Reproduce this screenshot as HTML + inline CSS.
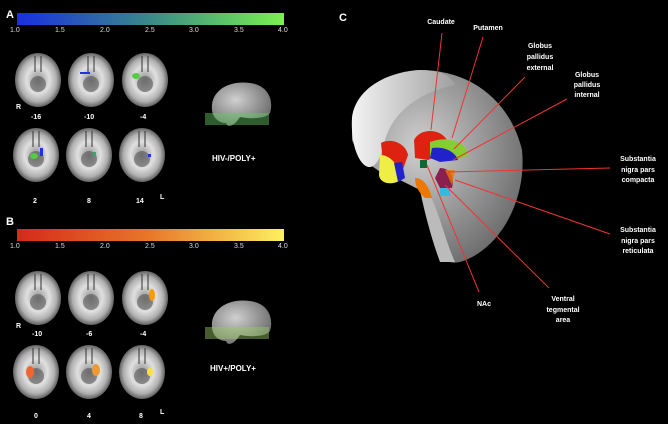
<!DOCTYPE html>
<html><head><meta charset="utf-8"><style>
html,body{margin:0;padding:0;background:#000;width:668px;height:424px;overflow:hidden}
svg text{font-family:"Liberation Sans",sans-serif;fill:#fff;font-weight:bold}
</style></head><body>
<svg width="668" height="424" viewBox="0 0 668 424" xmlns="http://www.w3.org/2000/svg">
<defs>
<linearGradient id="gA"><stop offset="0" stop-color="#1a2ee0"/><stop offset=".5" stop-color="#3a8a88"/><stop offset="1" stop-color="#7af050"/></linearGradient>
<linearGradient id="gB"><stop offset="0" stop-color="#d42a1a"/><stop offset=".5" stop-color="#e8782a"/><stop offset="1" stop-color="#fcf060"/></linearGradient>
<radialGradient id="sl" cx=".5" cy=".5" r=".5"><stop offset="0" stop-color="#909090"/><stop offset=".5" stop-color="#e0e0e0"/><stop offset=".8" stop-color="#b0b0b0"/><stop offset="1" stop-color="#606060"/></radialGradient>
<radialGradient id="br" cx=".4" cy=".4" r=".7"><stop offset="0" stop-color="#d0d0d0"/><stop offset="1" stop-color="#666"/></radialGradient>
<linearGradient id="med" x1="0" x2="1"><stop offset="0" stop-color="#f4f4f4"/><stop offset="1" stop-color="#a0a0a0"/></linearGradient>
<g id="slice"><ellipse cx="0" cy="0" rx="23" ry="27" fill="url(#sl)"/><ellipse cx="0" cy="4" rx="8" ry="8" fill="#555" opacity=".6"/><path d="M-3,-24 L-3,-8 M3,-24 L3,-8" stroke="#333" stroke-width="1"/></g>
<g id="mini"><path d="M-28,5 C-30,-15 -10,-25 10,-22 C28,-20 34,-5 30,8 C26,14 10,14 0,12 C-5,20 -12,24 -14,18 C-20,18 -27,14 -28,5Z" fill="url(#br)"/></g>
</defs>

<text x="6" y="18" font-size="11">A</text>
<rect x="17" y="13" width="267" height="12" fill="url(#gA)"/>
<g font-size="7">
<text x="10" y="32" style="font-weight:normal;fill:#ddd">1.0</text><text x="55" y="32" style="font-weight:normal;fill:#ddd">1.5</text><text x="100" y="32" style="font-weight:normal;fill:#ddd">2.0</text><text x="145" y="32" style="font-weight:normal;fill:#ddd">2.5</text><text x="189" y="32" style="font-weight:normal;fill:#ddd">3.0</text><text x="234" y="32" style="font-weight:normal;fill:#ddd">3.5</text><text x="278" y="32" style="font-weight:normal;fill:#ddd">4.0</text>
</g>
<use href="#slice" x="38" y="80"/><use href="#slice" x="91" y="80"/><use href="#slice" x="145" y="80"/>
<use href="#slice" x="36" y="155"/><use href="#slice" x="89" y="155"/><use href="#slice" x="142" y="155"/>
<ellipse cx="136" cy="76" rx="4" ry="3" fill="#5c4"/><ellipse cx="34" cy="156" rx="4" ry="3" fill="#5c4"/><rect x="40" y="148" width="3" height="8" fill="#23d"/>
<rect x="80" y="72" width="10" height="2" fill="#23d"/><rect x="148" y="154" width="3" height="3" fill="#23d"/><rect x="93" y="152" width="3" height="4" fill="#3a6"/>
<g font-size="7"><text x="16" y="109">R</text><text x="31" y="119">-16</text><text x="84" y="119">-10</text><text x="140" y="119">-4</text>
<text x="33" y="203">2</text><text x="87" y="203">8</text><text x="136" y="203">14</text><text x="160" y="199">L</text></g>
<use href="#mini" x="240" y="105"/>
<rect x="205" y="113" width="64" height="12" fill="#6c6" opacity=".45"/>
<text x="212" y="161" font-size="8">HIV-/POLY+</text>

<text x="6" y="225" font-size="11">B</text>
<rect x="17" y="229" width="267" height="12" fill="url(#gB)"/>
<g font-size="7">
<text x="10" y="248" style="font-weight:normal;fill:#ddd">1.0</text><text x="55" y="248" style="font-weight:normal;fill:#ddd">1.5</text><text x="100" y="248" style="font-weight:normal;fill:#ddd">2.0</text><text x="145" y="248" style="font-weight:normal;fill:#ddd">2.5</text><text x="189" y="248" style="font-weight:normal;fill:#ddd">3.0</text><text x="234" y="248" style="font-weight:normal;fill:#ddd">3.5</text><text x="278" y="248" style="font-weight:normal;fill:#ddd">4.0</text>
</g>
<use href="#slice" x="38" y="298"/><use href="#slice" x="91" y="298"/><use href="#slice" x="145" y="298"/>
<use href="#slice" x="36" y="372"/><use href="#slice" x="89" y="372"/><use href="#slice" x="142" y="372"/>
<ellipse cx="152" cy="295" rx="3" ry="6" fill="#f90"/><ellipse cx="30" cy="372" rx="4" ry="6" fill="#e63"/><ellipse cx="96" cy="370" rx="4" ry="6" fill="#e93"/><ellipse cx="150" cy="372" rx="3" ry="4" fill="#fd4"/>
<g font-size="7"><text x="16" y="328">R</text><text x="32" y="336">-10</text><text x="86" y="336">-6</text><text x="140" y="336">-4</text>
<text x="34" y="418">0</text><text x="87" y="418">4</text><text x="139" y="418">8</text><text x="160" y="414">L</text></g>
<use href="#mini" x="240" y="323"/>
<rect x="205" y="327" width="64" height="12" fill="#9c6" opacity=".45"/>
<text x="210" y="371" font-size="8">HIV+/POLY+</text>

<text x="339" y="21" font-size="11">C</text>
<path d="M352,118 C355,90 385,72 420,70 C470,70 510,100 522,150 C527,200 500,250 460,262 C450,264 445,262 440,250 C430,225 425,205 420,190 L400,180 C380,175 360,160 352,140 Z" fill="url(#br)"/>
<path d="M352,118 C355,90 385,72 420,70 C440,70 452,76 455,85 C430,90 395,105 385,140 C380,165 370,175 360,160 C354,150 351,135 352,118Z" fill="url(#med)"/>
<path d="M430,195 C440,215 445,240 455,262 L440,262 C432,240 425,215 420,190Z" fill="#bbb"/>
<path d="M381,143 C390,138 405,142 408,155 L402,172 L385,182 Z" fill="#d21"/>
<path d="M380,155 C390,155 400,165 400,180 C395,185 380,185 379,175Z" fill="#ee4"/>
<path d="M394,163 L402,162 L405,178 L398,182Z" fill="#22c"/>
<path d="M414,140 C420,128 440,128 447,140 L440,155 L428,160 L415,158Z" fill="#d21"/>
<path d="M430,142 C445,136 466,140 468,155 C462,160 445,162 430,158Z" fill="#8c3"/>
<path d="M432,148 C445,146 455,152 458,160 L440,162 L430,158Z" fill="#22c"/>
<path d="M440,168 C450,168 455,176 452,188 L440,188 L435,178Z" fill="#8a2050"/>
<path d="M445,170 L455,170 L452,185 Z" fill="#e70" opacity=".8"/>
<path d="M415,178 C425,178 430,190 432,198 L425,198 C418,192 415,185 415,178Z" fill="#e70"/>
<rect x="440" y="188" width="10" height="8" fill="#3bd"/>
<rect x="420" y="160" width="7" height="8" fill="#163"/>
<g stroke="#e33" stroke-width="1" fill="none">
<path d="M442,33 L431,130"/><path d="M483,37 L452,138"/><path d="M525,77 L454,149"/><path d="M567,99 L453,160"/>
<path d="M610,168 L448,172"/><path d="M610,234 L455,180"/><path d="M479,292 L427,165"/><path d="M549,288 L445,185"/>
</g>
<g font-size="7" text-anchor="middle">
<text x="441" y="24">Caudate</text><text x="488" y="30">Putamen</text>
<text x="540" y="48">Globus</text><text x="540" y="59">pallidus</text><text x="540" y="70">external</text>
<text x="587" y="77">Globus</text><text x="587" y="87">pallidus</text><text x="587" y="97">internal</text>
<text x="638" y="161">Substantia</text><text x="638" y="172">nigra pars</text><text x="638" y="182">compacta</text>
<text x="638" y="232">Substantia</text><text x="638" y="243">nigra pars</text><text x="638" y="253">reticulata</text>
<text x="484" y="306">NAc</text>
<text x="563" y="301">Ventral</text><text x="563" y="312">tegmental</text><text x="563" y="322">area</text>
</g>
</svg>
</body></html>
